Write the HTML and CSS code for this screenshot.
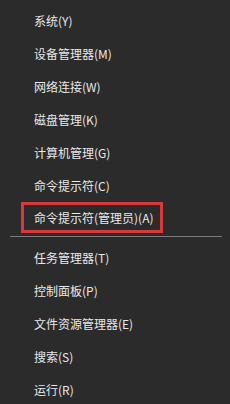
FILE: index.html
```html
<!DOCTYPE html>
<html lang="zh-CN">
<head>
    <meta charset="UTF-8">
    <meta name="viewport" content="width=device-width, initial-scale=1.0">
    <title>快速链接菜单</title>
    <link rel="stylesheet" href="styles.css">
</head>
<body>

    <ul class="quick-menu">
        <li class="menu-item">系统(Y)</li>
        <li class="menu-item">设备管理器(M)</li>
        <li class="menu-item">网络连接(W)</li>
        <li class="menu-item">磁盘管理(K)</li>
        <li class="menu-item">计算机管理(G)</li>
        <li class="menu-item">命令提示符(C)</li>
        <li class="menu-item highlight">命令提示符(管理员)(A)</li>

        <li class="menu-separator"></li>

        <li class="menu-item">任务管理器(T)</li>
        <li class="menu-item">控制面板(P)</li>
        <li class="menu-item">文件资源管理器(E)</li>
        <li class="menu-item">搜索(S)</li>
        <li class="menu-item">运行(R)</li>
    </ul>

</body>
</html>
```

FILE: styles.css
```css
body {
    font-family: "Noto Sans CJK SC", "Noto Sans", sans-serif;
    background-color: #2b2b2b;
    color: #e8e8e8;
    margin: 0;
    padding: 0;
}

.quick-menu {
    list-style: none;
    margin: 0;
    padding: 4px 0 0 0;
}

.menu-item {
    height: 33px;
    line-height: 33px;
    padding-left: 34px;
    font-size: 12px;
    white-space: nowrap;
}

/* red box round the admin prompt */
.menu-item.highlight {
    box-sizing: border-box;
    width: 142px;
    height: 31px;
    line-height: 25px;
    margin: 0 0 2px 21px;
    padding-left: 10px;
    border: 3px solid #d8393b;
}

.menu-separator {
    height: 1px;
    margin: 3px 8px 4px 10px;
    background-color: #7c7c7c;
}
```
